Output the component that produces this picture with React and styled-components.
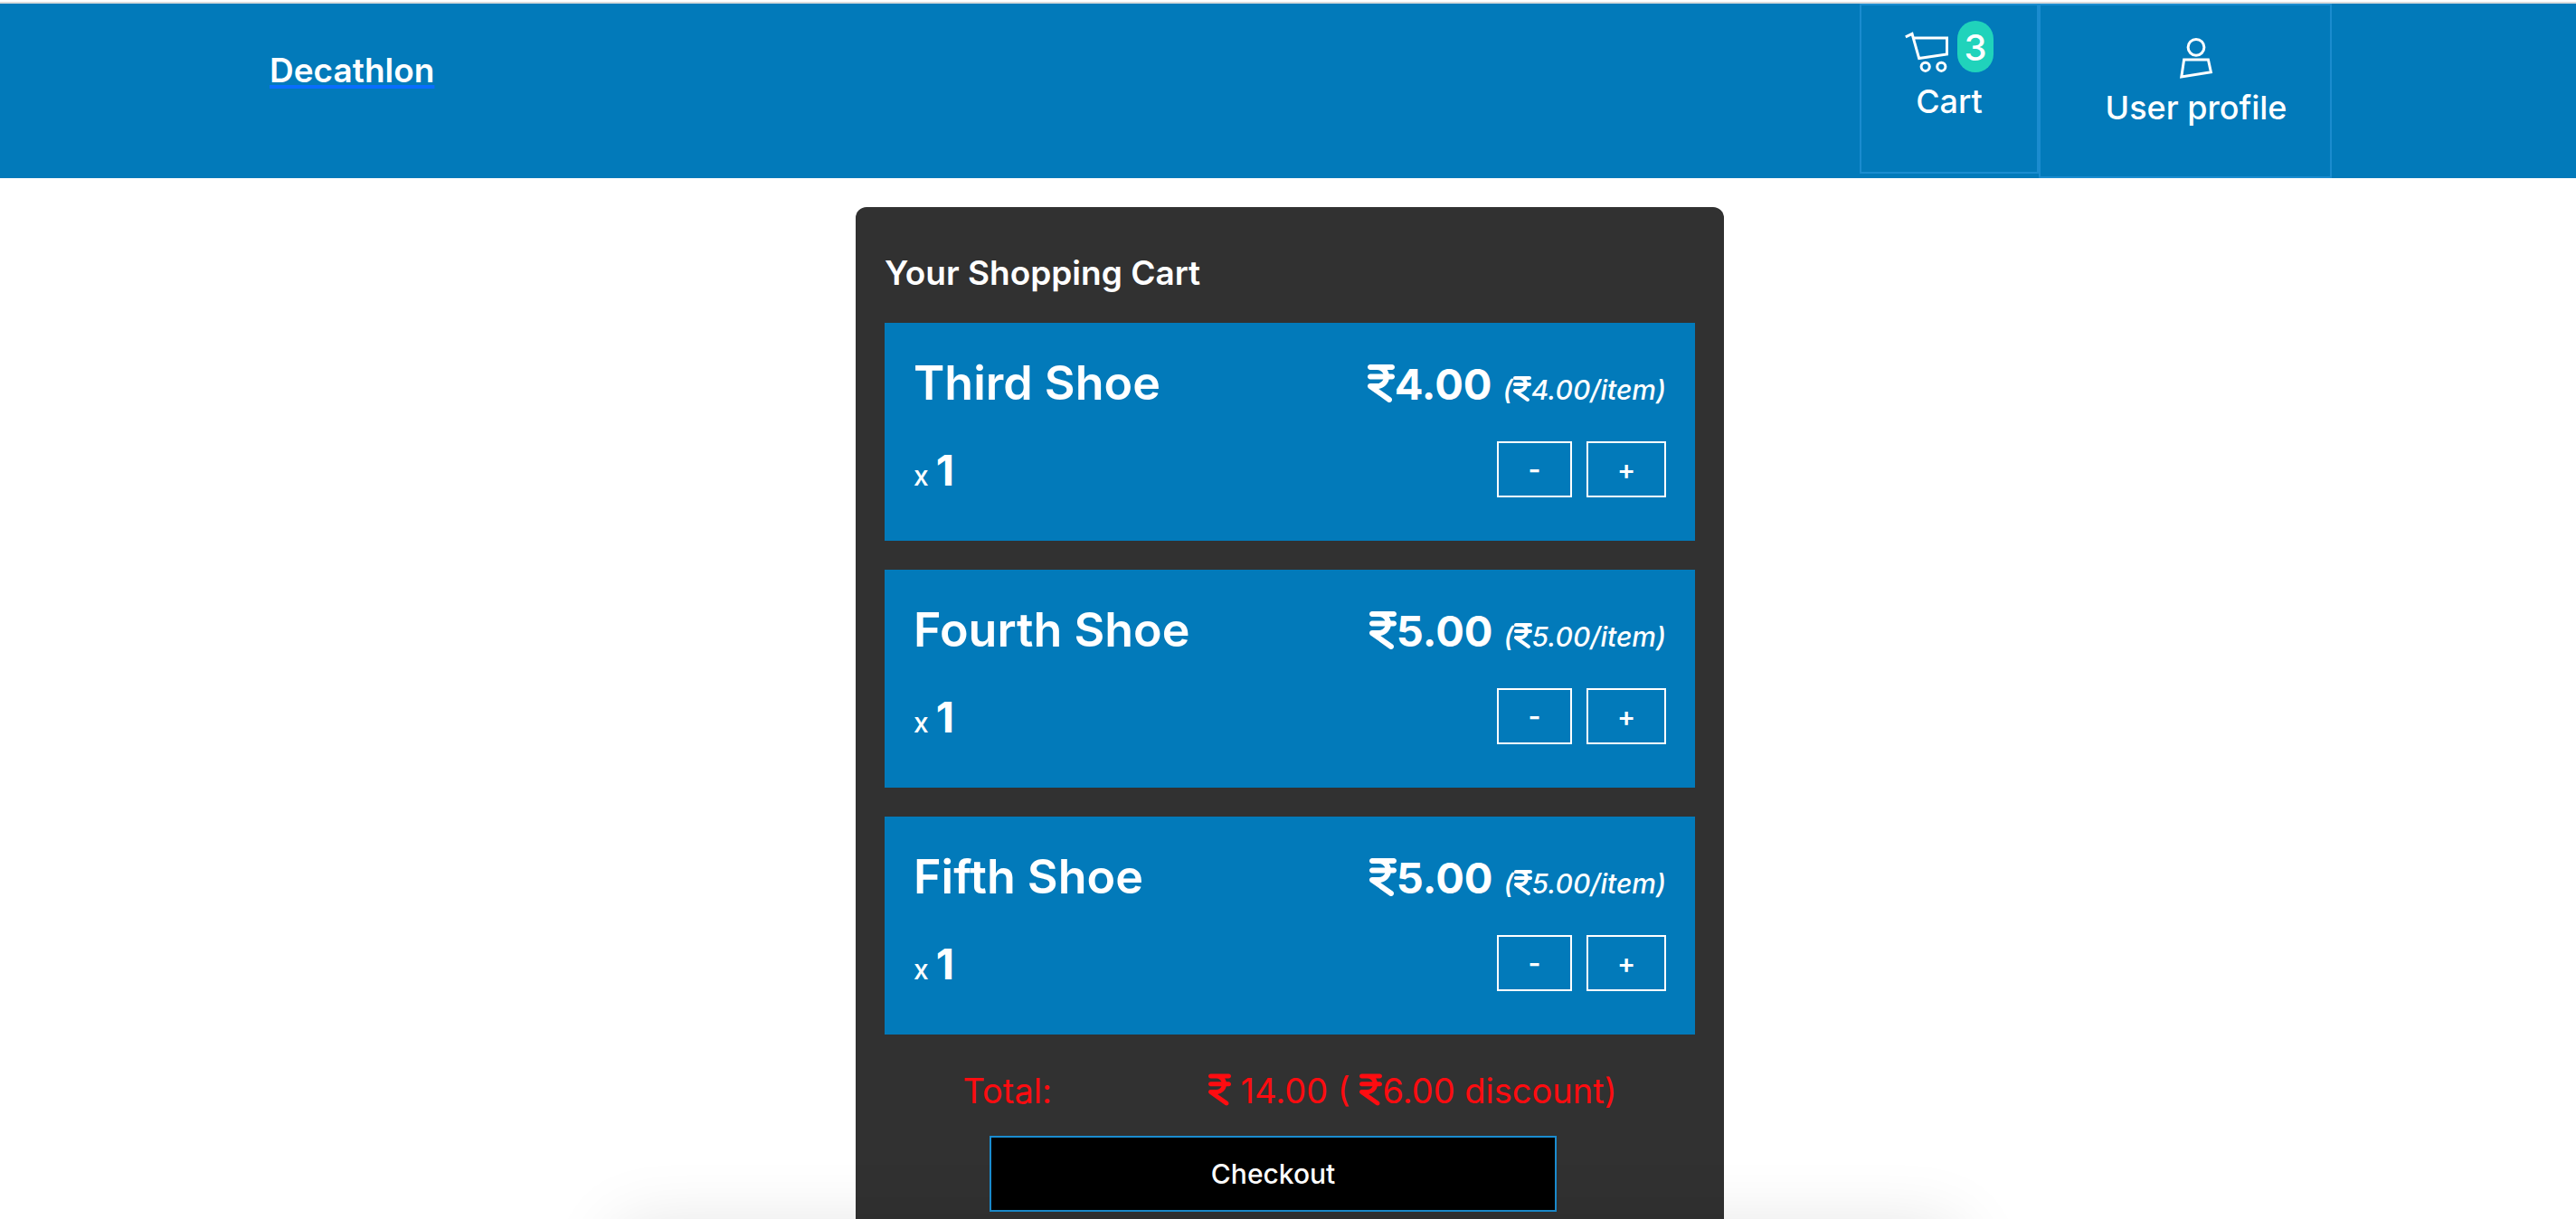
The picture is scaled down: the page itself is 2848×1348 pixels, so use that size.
import React, { useState } from "react";
import styled, { createGlobalStyle } from "styled-components";
import { FaIndianRupeeSign } from "react-icons/fa6";

const GlobalStyle = createGlobalStyle`
  *, *::before, *::after { box-sizing: border-box; }
  body { margin: 0; background: #fff; color: #fff; font-family: Inter, "Liberation Sans", sans-serif; }
  h1, h2, h3, p { margin: 0; }
`;

const Page = styled.div`
  height: 100vh;
  overflow-x: hidden;
  overflow-y: auto;
  scrollbar-width: none;
  padding-top: 2px;
`;

const Header = styled.header`
  display: flex;
  justify-content: space-between;
  align-items: flex-start;
  padding: 0 270px 0 298px;
  background: #027aba;
  border-top: 2px solid #dcdcdc;
`;

const Brand = styled.a`
  margin-top: 48px;
  font-size: 37px;
  line-height: 52px;
  font-weight: 600;
  color: #fff;
  text-decoration: underline;
  text-decoration-color: #0a6efd;
  text-decoration-thickness: 4px;
  text-underline-offset: 3px;
  text-decoration-skip-ink: none;
`;

const Nav = styled.nav`
  display: flex;
  align-items: flex-start;
`;

const NavLink = styled.a`
  display: flex;
  flex-direction: column;
  align-items: center;
  width: ${(p) => p.$width}px;
  height: ${(p) => p.$height}px;
  padding: ${(p) => p.$padding};
  border: 2px solid #1b8ccf;
  color: #fff;
  font-size: 36px;
  line-height: 64px;
  font-weight: 500;
  text-decoration: none;
`;

const CartTop = styled.span`
  display: flex;
  align-items: flex-end;
  gap: 10px;
`;

const Badge = styled.span`
  width: 40px;
  height: 57px;
  border-radius: 20px;
  background: #20d3bb;
  font-size: 40px;
  line-height: 60px;
  text-align: center;
`;

const Main = styled.main`
  padding: 32px 0 32px 4px;
`;

const Panel = styled.section`
  width: 960px;
  max-width: 100%;
  margin: 0 auto;
  padding: 48px 32px 32px;
  border-radius: 12px;
  background: #313131;
`;

const Heading = styled.h1`
  font-size: 37px;
  line-height: 50px;
  font-weight: 600;
`;

const Items = styled.ul`
  display: grid;
  gap: 32px;
  margin: 30px 0 32px;
  padding: 0;
  list-style: none;
`;

const Item = styled.li`
  padding: 32px 32px 48px;
  background: #027aba;
`;

const Row = styled.div`
  display: flex;
  justify-content: space-between;
  align-items: ${(p) => p.$align};
`;

const ItemName = styled.h2`
  font-size: 52px;
  line-height: 70px;
  font-weight: 600;
`;

const Price = styled.p`
  font-size: 47px;
  line-height: 60px;
  font-weight: 700;
`;

const Rupee = styled(FaIndianRupeeSign)`
  width: ${(p) => p.$size * 5 / 8}px;
  height: ${(p) => p.$size}px;
  vertical-align: ${(p) => -p.$size / 8}px;
`;

const Each = styled.em`
  margin-left: 12px;
  font-size: 30px;
  line-height: 32px;
  font-weight: 500;
`;

const Quantity = styled.p`
  font-size: 30px;
  line-height: 48px;
  font-weight: 500;

  strong { font-size: 47px; font-weight: 700; }
`;

const Steppers = styled.div`
  display: flex;
  gap: 16px;
  margin-top: 29px;
`;

const Stepper = styled.button`
  width: ${(p) => p.$width}px;
  height: 62px;
  padding: 0;
  border: 2px solid #fff;
  background: transparent;
  color: #fff;
  font: 600 30px/32px Inter, "Liberation Sans", sans-serif;
`;

const Total = styled.div`
  display: flex;
  justify-content: space-around;
  color: #ff0c10;
  font-size: 38px;
  line-height: 60px;
`;

const Checkout = styled.button`
  display: block;
  width: 70%;
  height: 84px;
  margin: 20px 0 0 116px;
  border: 2px solid #1b8ccf;
  background: #000;
  color: #fff;
  font: 500 30px/40px Inter, "Liberation Sans", sans-serif;
`;

const BottomShade = styled.div`
  position: fixed;
  left: 24%;
  right: 24%;
  top: 100vh;
  height: 100px;
  box-shadow: 0 10px 80px rgba(0, 0, 0, 0.12);
  pointer-events: none;
`;

const CartIcon = () => (
  <svg width="48" height="44" viewBox="0 0 48 44" fill="none" stroke="#fff" strokeWidth="3" overflow="visible" aria-hidden="true">
    <path d="M0.8 4.8 L8 1.4 L15.7 28.6 L46.5 24 V6 H9.5" />
    <circle cx="22.7" cy="37.8" r="4.6" />
    <circle cx="40.3" cy="37.8" r="4.6" />
  </svg>
);

const UserIcon = () => (
  <svg width="38" height="46" viewBox="0 0 38 46" fill="none" stroke="#fff" strokeWidth="3" overflow="visible" aria-hidden="true">
    <circle cx="19" cy="11.3" r="8.9" />
    <path d="M5.6 25 H32.4 L35.4 38.8 L2.8 44 Z" />
  </svg>
);

const INITIAL = [
  { name: "Third Shoe", price: 4, count: 1 },
  { name: "Fourth Shoe", price: 5, count: 1 },
  { name: "Fifth Shoe", price: 5, count: 1 },
];

export default function App() {
  const [items, setItems] = useState(INITIAL);
  const change = (name, by) =>
    setItems((list) => list.map((i) => (i.name === name ? { ...i, count: Math.max(0, i.count + by) } : i)));
  const count = items.reduce((n, i) => n + i.count, 0);
  const total = items.reduce((n, i) => n + i.count * i.price, 0);

  return (
    <>
      <GlobalStyle />
      <Page>
        <Header>
          <Brand href="#home">Decathlon</Brand>
          <Nav>
            <NavLink href="#cart" $width={198} $height={188} $padding="17px 0 0">
              <CartTop>
                <CartIcon />
                <Badge>{count}</Badge>
              </CartTop>
              Cart
            </NavLink>
            <NavLink href="#profile" $width={324} $height={193} $padding="35px 0 0 24px">
              <UserIcon />
              User profile
            </NavLink>
          </Nav>
        </Header>
        <Main>
          <Panel>
            <Heading>Your Shopping Cart</Heading>
            <Items>
              {items.map((item) => (
                <Item key={item.name}>
                  <Row $align="baseline">
                    <ItemName>{item.name}</ItemName>
                    <Price>
                      <Rupee $size={48} />
                      {(item.price * item.count).toFixed(2)}
                      <Each>
                        (<Rupee $size={32} />
                        {item.price.toFixed(2)}/item)
                      </Each>
                    </Price>
                  </Row>
                  <Row $align="flex-end">
                    <Quantity>
                      x <strong>{item.count}</strong>
                    </Quantity>
                    <Steppers>
                      <Stepper $width={83} aria-label={"Remove one " + item.name} onClick={() => change(item.name, -1)}>-</Stepper>
                      <Stepper $width={88} aria-label={"Add one " + item.name} onClick={() => change(item.name, 1)}>+</Stepper>
                    </Steppers>
                  </Row>
                </Item>
              ))}
            </Items>
            <Total>
              <span>Total:</span>
              <span>
                <Rupee $size={40} /> {total.toFixed(2)} ( <Rupee $size={40} />
                6.00 discount)
              </span>
            </Total>
            <Checkout>Checkout</Checkout>
          </Panel>
        </Main>
      </Page>
      <BottomShade />
    </>
  );
}
